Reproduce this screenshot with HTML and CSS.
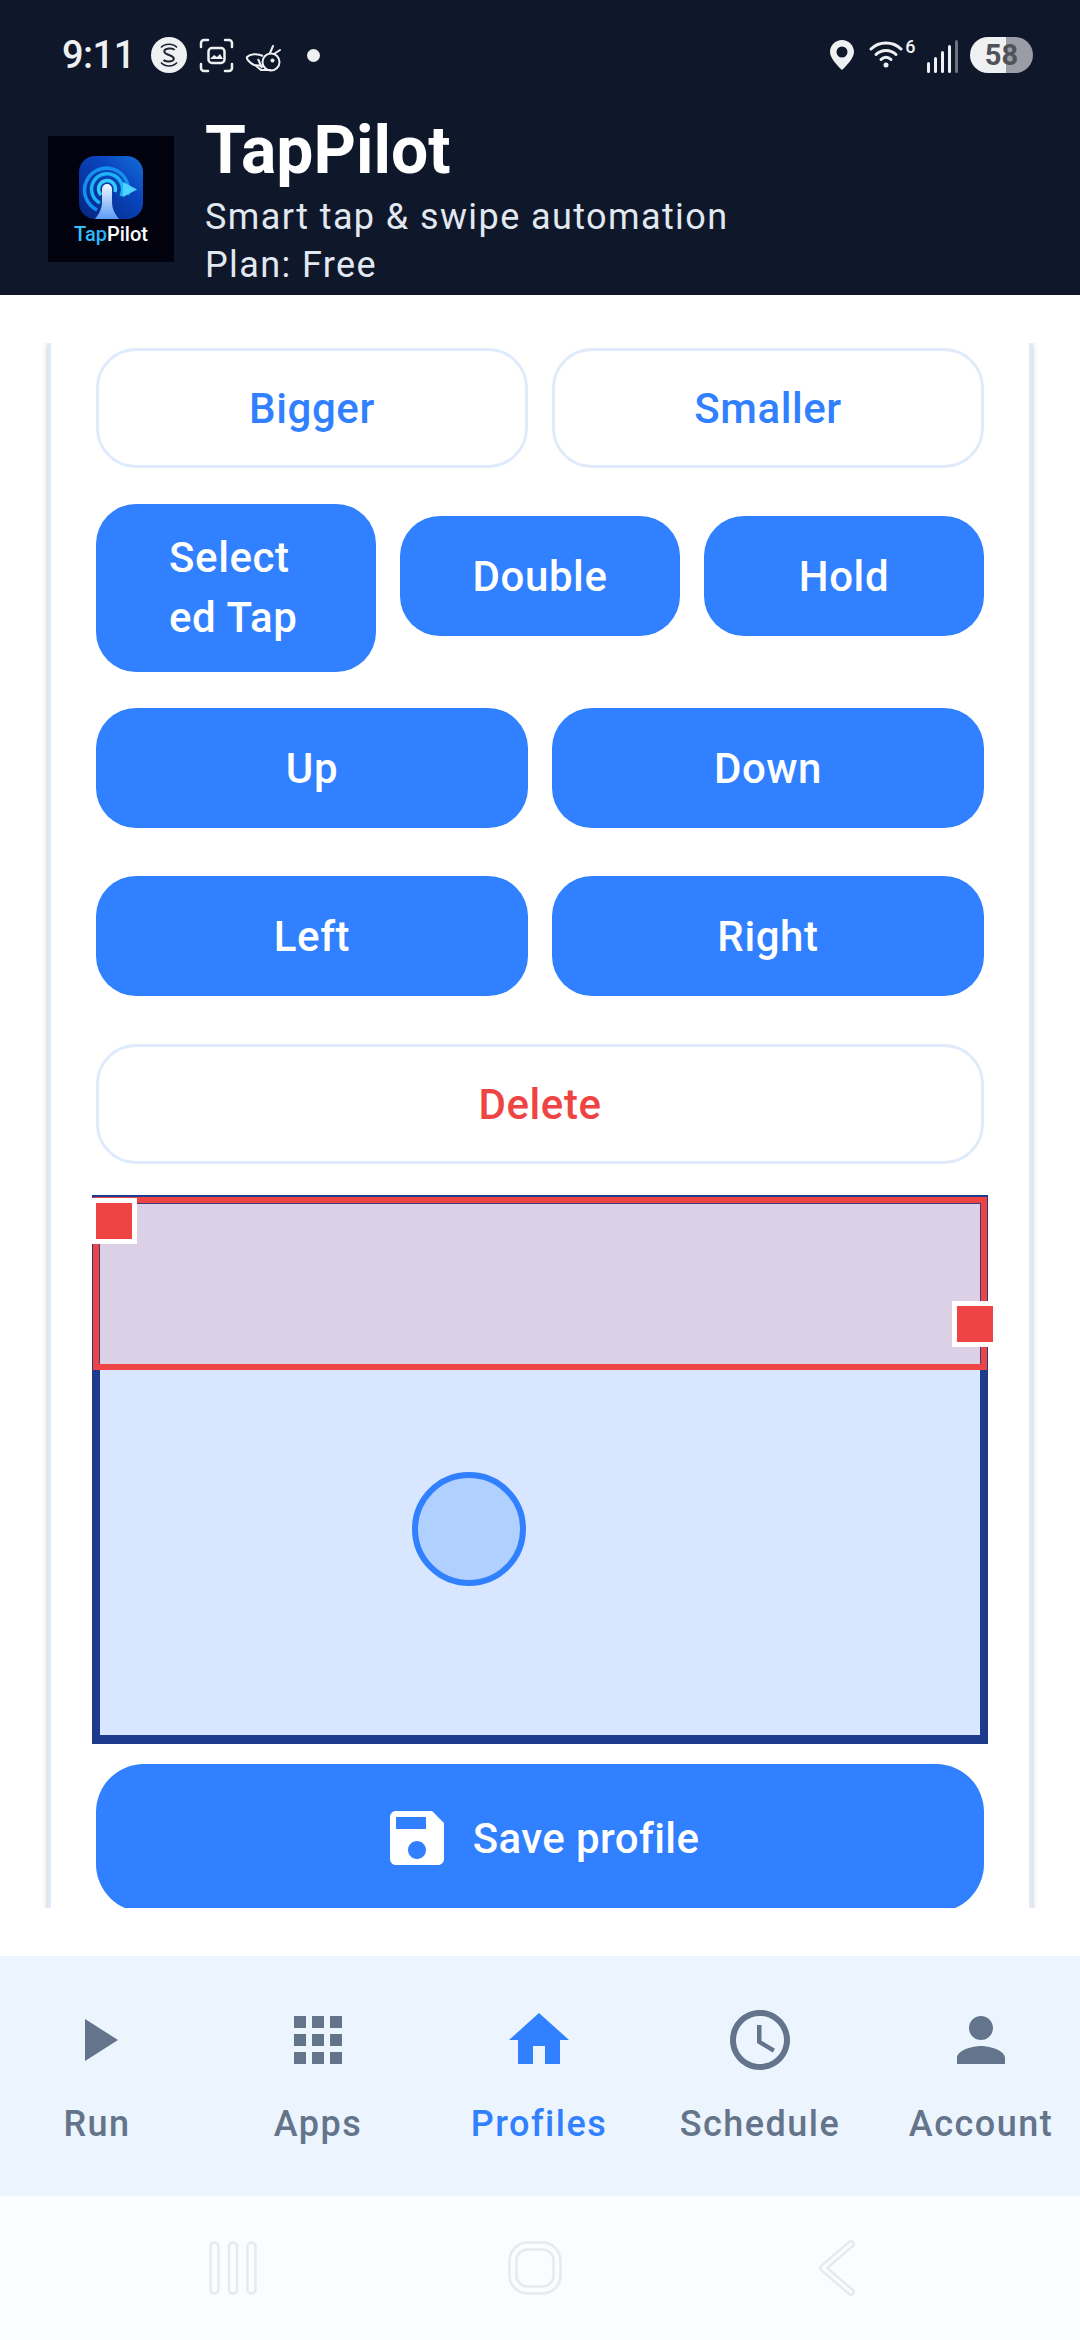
FILE: index.html
```html
<!DOCTYPE html>
<html lang="en">
<head>
<meta charset="utf-8">
<title>TapPilot</title>
<link rel="stylesheet" href="styles.css">
</head>
<body>
<div class="app">
  <header class="top">
    <div class="status">
      <div class="status-left">
        <span class="time">9:11</span>
        <svg class="ic-s" width="36" height="36" viewBox="0 0 36 36"><circle cx="18" cy="18" r="18" fill="#eef0f2"/><path d="M23.500 13C22 10.800 13.500 11 13.300 14.500C13.200 18 23 18 22.800 21.800C22.600 25 14.500 25.200 12.500 23" fill="none" stroke="#1a2233" stroke-width="2"/><path d="M10 10.500C13.500 6 22.500 6 26 10.500M10 25.500C13.500 30 22.500 30 26 25.500" fill="none" stroke="#1a2233" stroke-width="1.500"/></svg>
        <svg class="ic-shot" width="35" height="35" viewBox="0 0 35 35" fill="none" stroke="#eef0f2" stroke-width="2.500" stroke-linecap="round"><path d="M2 9V5a3 3 0 0 1 3-3h4M26 2h4a3 3 0 0 1 3 3v4M33 26v4a3 3 0 0 1-3 3h-4M9 33H5a3 3 0 0 1-3-3v-4"/><rect x="9.500" y="10" width="16" height="15" rx="3.500"/><path d="M11 21l4-4 3 2 3-3 3 5z" fill="#eef0f2" stroke="none"/></svg>
        <svg class="ic-bee" width="36" height="28" viewBox="0 0 36 28" fill="none" stroke="#eef0f2" stroke-width="2"><circle cx="26" cy="18" r="8.500"/><circle cx="27.500" cy="16.500" r="2" fill="#eef0f2" stroke="none"/><path d="M18 12C12 9 5 10 2 13C1 15 5 19 9 21L19 22"/><path d="M10 21L16 26H26M13 15L17 24"/><path d="M25 9L28 2M29 10L35 6" stroke-linecap="round"/></svg>
        <span class="dot"></span>
      </div>
      <div class="status-right">
        <svg width="24" height="30" viewBox="0 0 24 30"><path fill-rule="evenodd" fill="#eef0f2" d="M12 0C5.400 0 0 5.200 0 11.800C0 18 7 25.500 12 30C17 25.500 24 18 24 11.800C24 5.200 18.600 0 12 0ZM12 6.500A5.500 5.500 0 1 1 12 17.500A5.500 5.500 0 1 1 12 6.500Z"/></svg>
        <div class="wifi">
          <svg width="34" height="30" viewBox="0 0 34 30" fill="none" stroke="#eef0f2" stroke-width="3" stroke-linecap="round"><path d="M2 10C10 2 24 2 32 10"/><path d="M7 15.500C12.500 10 21.500 10 27 15.500"/><path d="M12 20.500C15 17.500 19 17.500 22 20.500"/><circle cx="17" cy="26" r="2.500" fill="#eef0f2" stroke="none"/></svg>
          <span class="wifi-num">6</span>
        </div>
        <div class="signal">
          <span class="bar bar-1"></span><span class="bar bar-2"></span><span class="bar bar-3"></span><span class="bar bar-4"></span><span class="bar bar-5"></span>
        </div>
        <div class="battery">58</div>
      </div>
    </div>
    <div class="brand">
      <svg class="logo" width="126" height="126" viewBox="0 0 126 126">
        <defs>
          <linearGradient id="tile" x1="0" y1="1" x2="1" y2="0"><stop offset="0" stop-color="#04257e"/><stop offset=".65" stop-color="#0a46c0"/><stop offset="1" stop-color="#1470d8"/></linearGradient>
          <linearGradient id="finger" x1="0" y1="0" x2="0" y2="1"><stop offset="0" stop-color="#f2f7ff"/><stop offset="1" stop-color="#5a9cf5"/></linearGradient>
          <linearGradient id="tap" x1="0" y1="0" x2="1" y2="0"><stop offset="0" stop-color="#35c6ff"/><stop offset="1" stop-color="#1597f0"/></linearGradient>
        </defs>
        <rect width="126" height="126" fill="#02020f"/>
        <rect x="31" y="20" width="64" height="63" rx="16" fill="url(#tile)"/>
        <g fill="none" stroke-width="3.500">
          <path d="M49 74A22 22 0 1 1 80 59" stroke="#1590ee"/>
          <path d="M52 67A15.500 15.500 0 1 1 73 60" stroke="#1cb4f6"/>
          <path d="M53 59A8.500 8.500 0 1 1 67 56" stroke="#36cdfa"/>
        </g>
        <path d="M54 53a5 5 0 0 1 10 0V66C64 74 68 79 71 83H47C50 79 54 74 54 66Z" fill="url(#finger)"/>
        <path d="M75 46L89 53.500L75 61Z" fill="#4fd2ff"/>
        <text class="logo-text" x="26" y="105"><tspan fill="url(#tap)">Tap</tspan><tspan fill="#ffffff">Pilot</tspan></text>
      </svg>
      <div class="brand-text">
        <h1 class="title">TapPilot</h1>
        <p class="sub sub-first">Smart tap &amp; swipe automation</p>
        <p class="sub">Plan: Free</p>
      </div>
    </div>
  </header>

  <main class="scroller">
    <section class="card">
      <div class="row row-a">
        <button class="btn outline">Bigger</button>
        <button class="btn outline">Smaller</button>
      </div>
      <div class="row row-three">
        <button class="btn solid tall"><span class="wrapped">Select<br>ed Tap</span></button>
        <button class="btn solid short">Double</button>
        <button class="btn solid short">Hold</button>
      </div>
      <div class="row row-b">
        <button class="btn solid">Up</button>
        <button class="btn solid">Down</button>
      </div>
      <div class="row row-b">
        <button class="btn solid">Left</button>
        <button class="btn solid">Right</button>
      </div>
      <button class="btn outline danger">Delete</button>
      <div class="canvas">
        <div class="zone"></div>
        <span class="handle handle-tl"></span>
        <span class="handle handle-r"></span>
        <span class="target"></span>
      </div>
      <button class="btn solid save">
        <svg width="72" height="72" viewBox="0 0 24 24" fill="#ffffff"><path d="M17 3H5c-1.110 0-2 .9-2 2v14c0 1.100.89 2 2 2h14c1.100 0 2-.9 2-2V7l-4-4zm-5 16c-1.660 0-3-1.340-3-3s1.340-3 3-3 3 1.340 3 3-1.340 3-3 3zm3-10H5V5h10v4z"/></svg>
        <span>Save profile</span>
      </button>
    </section>
  </main>

  <nav class="tabs">
    <div class="tab">
      <svg width="72" height="72" viewBox="0 0 24 24"><path d="M8 5v14l11-7z"/></svg>
      <span>Run</span>
    </div>
    <div class="tab">
      <svg width="72" height="72" viewBox="0 0 24 24"><path d="M4 8h4V4H4zm6 12h4v-4h-4zm-6 0h4v-4H4zm0-6h4v-4H4zm6 0h4v-4h-4zm6-10v4h4V4zm-6 4h4V4h-4zm6 6h4v-4h-4zm0 6h4v-4h-4z"/></svg>
      <span>Apps</span>
    </div>
    <div class="tab active">
      <svg width="72" height="72" viewBox="0 0 24 24"><path d="M10 20v-6h4v6h5v-8h3L12 3 2 12h3v8z"/></svg>
      <span>Profiles</span>
    </div>
    <div class="tab">
      <svg width="72" height="72" viewBox="0 0 24 24"><path d="M11.990 2C6.470 2 2 6.480 2 12s4.470 10 9.990 10C17.520 22 22 17.520 22 12S17.520 2 11.990 2zM12 20c-4.420 0-8-3.580-8-8s3.580-8 8-8 8 3.580 8 8-3.580 8-8 8zm.5-13H11v6l5.250 3.150.75-1.230-4.500-2.670z"/></svg>
      <span>Schedule</span>
    </div>
    <div class="tab">
      <svg width="72" height="72" viewBox="0 0 24 24"><path d="M12 12c2.210 0 4-1.790 4-4s-1.790-4-4-4-4 1.790-4 4 1.790 4 4 4zm0 2c-2.670 0-8 1.340-8 4v2h16v-2c0-2.660-5.330-4-8-4z"/></svg>
      <span>Account</span>
    </div>
  </nav>

  <div class="sysnav">
    <svg width="48" height="54" viewBox="0 0 48 54" fill="none" stroke="#e8e9ec" stroke-width="2.500"><rect x="1.500" y="1.500" width="8" height="51" rx="4"/><rect x="20" y="1.500" width="8" height="51" rx="4"/><rect x="38.500" y="1.500" width="8" height="51" rx="4"/></svg>
    <svg width="54" height="54" viewBox="0 0 54 54" fill="none" stroke="#e8e9ec" stroke-width="2.500"><rect x="1.500" y="1.500" width="51" height="51" rx="18"/><rect x="8.500" y="8.500" width="37" height="37" rx="11"/></svg>
    <svg width="38" height="56" viewBox="0 0 38 56" fill="none"><path d="M33 4L5 28L33 52" stroke="#e8e9ec" stroke-width="8" stroke-linecap="round" stroke-linejoin="round"/><path d="M33 4L5 28L33 52" stroke="#fbfcfe" stroke-width="3" stroke-linecap="round" stroke-linejoin="round"/></svg>
  </div>
</div>
</body>
</html>
```
FILE: styles.css
```css
* { box-sizing: border-box; }
html, body { margin: 0; padding: 0; }
body { width: 1080px; height: 2340px; overflow: hidden; background: #fff; font-family: Roboto, "Liberation Sans", sans-serif; }
.app { width: 1080px; height: 2340px; display: flex; flex-direction: column; background: #fff; }

.top { height: 295px; background: #0f172a; flex: none; }
.status { height: 112px; padding: 37px 47px 0 62px; display: flex; justify-content: space-between; align-items: flex-start; }
.status-left, .status-right { display: flex; align-items: center; height: 36px; }
.status svg { display: block; flex: none; }
.time { font-size: 38px; font-weight: 500; color: #eef0f2; line-height: 36px; letter-spacing: -.5px; width: 89px; }
.ic-shot { margin-left: 12px; }
.ic-bee { margin-left: 11px; margin-top: 5px; }
.dot { width: 13px; height: 13px; border-radius: 50%; background: #eef0f2; margin-left: 26px; }
.status-right { gap: 12px; }
.wifi { display: flex; align-items: flex-start; gap: 2px; height: 36px; padding-top: 2px; margin-left: 3px; }
.wifi-num { font-size: 18px; line-height: 16px; color: #eef0f2; font-weight: 500; }
.signal { display: flex; align-items: flex-end; gap: 3.500px; height: 34px; margin-top: 1px; margin-left: -1px; }
.bar { width: 3.500px; background: #eef0f2; border-radius: 2px; }
.bar-1 { height: 11px; }
.bar-2 { height: 16px; }
.bar-3 { height: 22px; }
.bar-4 { height: 28px; }
.bar-5 { height: 33px; background: #6c7280; }
.battery { width: 63px; height: 36px; border-radius: 18px; background: linear-gradient(90deg, #eef0f2 57%, #9a9da6 57%); color: #50525a; font-size: 29px; font-weight: 700; line-height: 36px; text-align: center; }

.brand { display: flex; padding-left: 48px; gap: 31px; }
.logo { display: block; flex: none; margin-top: 24px; }
.logo-text { font-family: Roboto, sans-serif; font-size: 20px; font-weight: 500; }
.title { margin: 0; font-size: 66px; line-height: 78px; font-weight: 700; color: #fff; }
.sub { margin: 0; font-size: 36px; line-height: 48px; color: #e2e8f0; letter-spacing: 1.400px; }
.sub-first { margin-top: 3px; }

.scroller { flex: none; height: 1565px; margin: 48px 0; padding: 0 48px; overflow: hidden; background: #fff; display: flex; flex-direction: column; }
.card { flex: none; height: 1700px; padding: 5px 45px 0; border-left: 3px solid #dfe9fa; border-right: 3px solid #dfe9fa; box-shadow: 0 0 6px rgba(0, 0, 0, .25); background: #fff; display: flex; flex-direction: column; }

.row { display: grid; gap: 24px; }
.row-a, .row-b { grid-template-columns: 1fr 1fr; }
.row-a { margin-bottom: 36px; }
.row-b { margin-bottom: 48px; }
.row-three { grid-template-columns: 1fr 1fr 1fr; align-items: flex-start; margin-bottom: 36px; }

.btn { height: 120px; padding: 0; border: 0; border-radius: 40px; font-family: Roboto, sans-serif; font-size: 42px; font-weight: 500; letter-spacing: .6px; display: flex; align-items: center; justify-content: center; }
.solid { background: #3080ff; color: #fff; }
.outline { background: #fff; color: #3080ff; border: 3px solid #dfeafb; }
.danger { color: #ef4444; flex: none; width: 100%; }
.tall { height: 168px; }
.short { margin-top: 12px; }
.wrapped { display: block; width: 134px; text-align: left; line-height: 60px; }

.canvas { position: relative; flex: none; width: 896px; height: 549px; margin: 31px -4px 20px; background: #d8e7ff; border-style: solid; border-color: #1e3a8a; border-width: 9px 8px; }
.zone { position: absolute; left: -7px; top: -7px; width: 894px; height: 173px; border: 6px solid #ef4444; background: rgba(239, 68, 68, .14); background-clip: padding-box; }
.handle { position: absolute; width: 46px; height: 46px; background: #ef4444; border: 5px solid #fff; }
.handle-tl { left: -9px; top: -6px; }
.handle-r { left: 852px; top: 97px; }
.target { position: absolute; left: 312px; top: 268px; width: 114px; height: 114px; border-radius: 50%; border: 6px solid #3080ff; background: #b0d0ff; }

.save { flex: none; height: 148px; border-radius: 48px; gap: 20px; width: 100%; letter-spacing: .4px; }
.save svg { display: block; }

.tabs { flex: none; height: 240px; background: #ecf4fe; padding: 48px 0 0 17px; display: grid; grid-template-columns: repeat(5, 160px); gap: 61px; }
.tab { display: flex; flex-direction: column; align-items: center; color: #64748b; white-space: nowrap; }
.tab svg { display: block; fill: #64748b; margin-bottom: 24px; }
.tab span { font-size: 36px; line-height: 48px; font-weight: 500; letter-spacing: 1.500px; }
.tab.active { color: #3080ff; }
.tab.active svg { fill: #3080ff; }

.sysnav { flex: none; height: 144px; background: #fbfcfe; padding-left: 82px; display: grid; grid-template-columns: repeat(3, 302px); align-items: center; justify-items: center; }
.sysnav svg { display: block; }
```
